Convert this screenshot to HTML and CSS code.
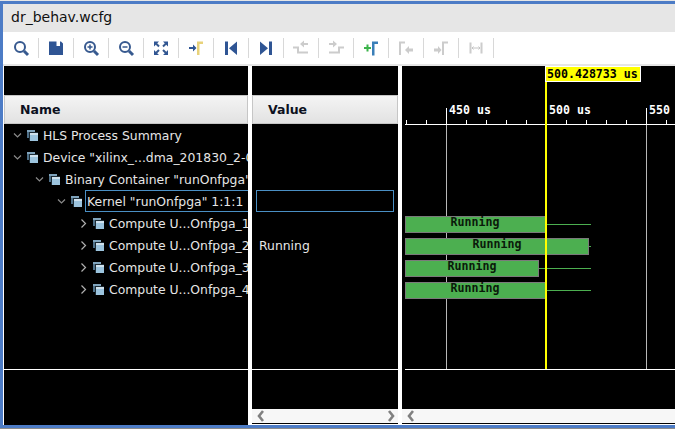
FILE: index.html
```html
<!doctype html>
<html>
<head>
<meta charset="utf-8">
<title>dr_behav.wcfg</title>
<link rel="stylesheet" href="styles.css">
</head>
<body>
<svg class="defs" width="0" height="0">
	<symbol id="scope" viewBox="0 0 11 11">
		<rect x="0" y="0" width="8" height="8" fill="#4f7088"/>
		<rect x="0" y="0" width="8" height="2" fill="#7fa3bc"/>
		<rect x="2" y="2" width="9" height="9" fill="#1c2a33"/>
		<rect x="3" y="3" width="8" height="8" fill="#9cc4de"/>
		<rect x="3" y="3" width="8" height="2" fill="#d0e2ee"/>
	</symbol>
	<symbol id="open" viewBox="0 0 9 9">
		<path d="M1 2.500l3.500 3.500l3.500-3.500" fill="none" stroke="#8a8a8a" stroke-width="1.200"/>
	</symbol>
	<symbol id="closed" viewBox="0 0 9 9">
		<path d="M2.500 .5l4 4l-4 4" fill="none" stroke="#b0b0b0" stroke-width="1.200"/>
	</symbol>
	<symbol id="sb-left" viewBox="0 0 8 12">
		<path d="M6 1l-4 5l4 5" fill="none" stroke="#808080" stroke-width="2.600"/>
	</symbol>
	<symbol id="sb-right" viewBox="0 0 8 12">
		<path d="M2 1l4 5l-4 5" fill="none" stroke="#808080" stroke-width="2.600"/>
	</symbol>
</svg>

<div class="window">
	<div class="title">dr_behav.wcfg</div>

	<div class="toolbar">
		<div class="tool"><svg viewBox="0 0 20 20"><circle class="ln" cx="9" cy="9" r="5"/><path class="ln thick" d="M13 13l4 4"/></svg></div>
		<div class="tool"><svg viewBox="0 0 20 20"><path class="navy" d="M3 3.500h7.500v4.500h3.500v-4.500h1l2 2v11.500h-14z"/></svg></div>
		<div class="tool"><svg viewBox="0 0 20 20"><circle class="ln" cx="9" cy="9" r="5"/><path class="ln thin" d="M6.500 9h5M9 6.500v5"/><path class="ln thick" d="M13 13l4 4"/></svg></div>
		<div class="tool"><svg viewBox="0 0 20 20"><circle class="ln" cx="9" cy="9" r="5"/><path class="ln thin" d="M6.500 9h5"/><path class="ln thick" d="M13 13l4 4"/></svg></div>
		<div class="tool"><svg viewBox="0 0 20 20"><path class="navy" d="M3 3.500h5l-5 5zM17 3.500v5l-5-5zM3 17v-5l5 5zM17 17h-5l5-5z"/><path class="ln" d="M5 5.500l3 3M15 5.500l-3 3M5 15l3-3M15 15l-3-3"/></svg></div>
		<div class="tool"><svg viewBox="0 0 20 20"><path class="navy" d="M3 9h4v-2.500l3.500 3.500l-3.500 3.500v-2.500h-4z"/><path class="gold" d="M11 3.500h6v2.500h-3.500v11h-2.500z"/></svg></div>
		<div class="tool"><svg viewBox="0 0 20 20"><path class="navy" d="M4 3.500h3v13.500h-3zM16 3.500v13.500l-8-6.750z"/></svg></div>
		<div class="tool"><svg viewBox="0 0 20 20"><path class="navy" d="M13 3.500h3v13.500h-3zM4 3.500v13.500l8-6.750z"/></svg></div>
		<div class="tool"><svg viewBox="0 0 20 20"><path class="off-ln" d="M2 9.500h5v5h10"/><path class="off" d="M17 5h-4v-2.500l-4 3.500l4 3.500v-2.500h4z"/></svg></div>
		<div class="tool"><svg viewBox="0 0 20 20"><path class="off-ln" d="M18 9.500h-5v5h-10"/><path class="off" d="M3 5h4v-2.500l4 3.500l-4 3.500v-2.500h-4z"/></svg></div>
		<div class="tool"><svg viewBox="0 0 20 20"><path class="green" d="M5 8h2.500v-2.500h2v2.500h2.500v2h-2.500v2.500h-2v-2.500h-2.500z" transform="translate(-2 1)"/><path class="blue" d="M11 3.500h6v2.500h-3.500v11.500h-2.500z"/></svg></div>
		<div class="tool"><svg viewBox="0 0 20 20"><path class="off" d="M3 3.500h6v2h-4v11.500h-2z"/><path class="off" d="M17 11h-4v-2.500l-4 4l4 4v-2.500h4z" transform="translate(0 -.5)"/></svg></div>
		<div class="tool"><svg viewBox="0 0 20 20"><path class="off" d="M11 3.500h6v2h-4v11.500h-2z"/><path class="off" d="M3 11h4v-2.500l3.500 4l-3.500 4v-2.500h-4z" transform="translate(0 -.5)"/></svg></div>
		<div class="tool"><svg viewBox="0 0 20 20"><path class="off-ln" d="M4.500 4.500v11M15.500 4.500v11"/><path class="off-thin" d="M6 10h8M7.500 8.500l-1.500 1.500l1.500 1.500M12.500 8.500l1.500 1.500l-1.500 1.500"/></svg></div>
	</div>

	<div class="panes">
		<div class="pane names">
			<div class="pane-head">Name</div>
			<div class="tree">
				<div class="row lv0"><svg class="chev"><use href="#open"/></svg><svg class="scope"><use href="#scope"/></svg><span class="label">HLS Process Summary</span></div>
				<div class="row lv0"><svg class="chev"><use href="#open"/></svg><svg class="scope"><use href="#scope"/></svg><span class="label">Device "xilinx_...dma_201830_2-0"</span></div>
				<div class="row lv1"><svg class="chev"><use href="#open"/></svg><svg class="scope"><use href="#scope"/></svg><span class="label">Binary Container "runOnfpga"</span></div>
				<div class="row lv2"><svg class="chev"><use href="#open"/></svg><svg class="scope"><use href="#scope"/></svg><span class="label selected">Kernel "runOnfpga" 1:1:1</span></div>
				<div class="row lv3"><svg class="chev"><use href="#closed"/></svg><svg class="scope"><use href="#scope"/></svg><span class="label">Compute U...Onfpga_1</span></div>
				<div class="row lv3"><svg class="chev"><use href="#closed"/></svg><svg class="scope"><use href="#scope"/></svg><span class="label">Compute U...Onfpga_2</span></div>
				<div class="row lv3"><svg class="chev"><use href="#closed"/></svg><svg class="scope"><use href="#scope"/></svg><span class="label">Compute U...Onfpga_3</span></div>
				<div class="row lv3"><svg class="chev"><use href="#closed"/></svg><svg class="scope"><use href="#scope"/></svg><span class="label">Compute U...Onfpga_4</span></div>
			</div>
			<div class="foot"></div>
		</div>

		<div class="pane values">
			<div class="pane-head">Value</div>
			<div class="tree">
				<div class="vrow"></div>
				<div class="vrow"></div>
				<div class="vrow"></div>
				<div class="vrow selected"></div>
				<div class="vrow"></div>
				<div class="vrow">Running</div>
				<div class="vrow"></div>
				<div class="vrow"></div>
			</div>
			<div class="foot"></div>
			<div class="scrollbar">
				<svg class="sb"><use href="#sb-left"/></svg>
				<svg class="sb"><use href="#sb-right"/></svg>
			</div>
		</div>

		<div class="pane wave">
			<!-- viewBox uses page coordinates so x values read the same as the time axis -->
			<svg class="canvas" viewBox="402 66 273 343">
				<path class="grid" d="M446.500 124V369M646.500 124V369"/>
				<path class="axis" d="M405 124.500H675M405 369.500H675"/>
				<path class="axis" d="M406.500 120v4M426.500 120v4M446.500 108v16M466.500 120v4M486.500 120v4M506.500 120v4M526.500 120v4M566.500 120v4M586.500 120v4M606.500 120v4M626.500 120v4M646.500 108v16M666.500 120v4"/>
				<text class="tick" x="449" y="114">450 us</text>
				<text class="tick" x="549" y="114">500 us</text>
				<text class="tick" x="649" y="114">550</text>

				<path class="trace" d="M546 224.500H591M589 246.500H591M539 268.500H591M546 290.500H591"/>
				<rect class="bar" x="405.500" y="216.500" width="141" height="16"/>
				<rect class="bar" x="405.500" y="238.500" width="183" height="16"/>
				<rect class="bar" x="405.500" y="260.500" width="133" height="16"/>
				<rect class="bar" x="405.500" y="282.500" width="141" height="16"/>
				<text class="state" x="475" y="226">Running</text>
				<text class="state" x="497" y="248">Running</text>
				<text class="state" x="472" y="270">Running</text>
				<text class="state" x="475" y="292">Running</text>

				<rect class="cursor" x="545" y="66" width="2" height="303"/>
				<rect class="flag" x="545.500" y="66.500" width="95" height="15"/>
				<text class="flag-text" x="547" y="78">500.428733 us</text>
			</svg>
			<div class="scrollbar">
				<svg class="sb"><use href="#sb-left"/></svg>
			</div>
		</div>
	</div>
</div>
</body>
</html>
```

FILE: styles.css
```css
*{
	margin:0;
	padding:0;
	box-sizing:border-box;
}
html,body{
	width:675px;
	height:429px;
	overflow:hidden;
}
body{
	background:#8c8c8c;
	font-family:"DejaVu Sans",sans-serif;
	font-size:12.400px;
}
.defs{
	position:absolute;
}
.window{
	height:427px;
	margin-top:1px;
	display:flex;
	flex-direction:column;
	background:#fff;
	border-top:3px solid #4d7cc6;
	border-left:3px solid #4d7cc6;
	border-bottom:3px solid #4d7cc6;
	box-shadow:0 -1px 0 #e6e6e6;
}

/* title + toolbar */
.title{
	height:28px;
	line-height:26px;
	padding-left:8px;
	background:#e6e6e6;
	color:#111;
	font-size:14px;
}
.toolbar{
	height:32px;
	display:flex;
	padding-left:1px;
	align-items:center;
	background:#fff;
	border-bottom:2px solid #e6e6e6;
	box-sizing:content-box;
}
.tool{
	width:35px;
	height:20px;
	display:flex;
	justify-content:center;
	border-right:1px solid #d8d8d8;
}
.tool svg{
	width:20px;
	height:20px;
}
.ln{
	fill:none;
	stroke:#37598f;
	stroke-width:2;
}
.ln.thin{
	stroke-width:1.500;
}
.ln.thick{
	stroke-width:3;
}
.navy{
	fill:#2f5594;
}
.gold{
	fill:#e8d27a;
}
.green{
	fill:#3cb44b;
}
.blue{
	fill:#3a7fb8;
}
.off{
	fill:#cccccc;
}
.off-ln{
	fill:none;
	stroke:#cccccc;
	stroke-width:2;
}
.off-thin{
	fill:none;
	stroke:#c4c4c4;
	stroke-width:1;
}

/* panes */
.panes{
	flex:1;
	min-height:0;
	display:grid;
	grid-template-columns:244px 146px 273px;
	column-gap:4px;
	padding-left:1px;
}
.pane{
	display:flex;
	flex-direction:column;
	min-width:0;
	background:#000;
	color:#e6e6e6;
}
.pane-head{
	height:29px;
	margin-top:29px;
	line-height:27px;
	padding-left:15px;
	background:linear-gradient(#f4f4f4,#e2e2e2);
	border:1px solid #c6c6c6;
	color:#0c1020;
	font-weight:bold;
	font-size:12.500px;
}
.tree{
	height:245px;
}
.foot{
	flex:1;
	border-top:1px solid #fff;
}
.row{
	height:22px;
	display:flex;
	align-items:center;
	white-space:nowrap;
	overflow:hidden;
}
.lv0{
	padding-left:9px;
}
.lv1{
	padding-left:31px;
}
.lv2{
	padding-left:53px;
}
.lv3{
	padding-left:75px;
}
.chev{
	width:9px;
	height:9px;
	flex:none;
	margin-right:5px;
}
.scope{
	width:11px;
	height:11px;
	flex:none;
	margin-right:3px;
}
.label{
	flex:1;
	height:22px;
	line-height:22px;
	padding-left:1px;
	border:1px solid transparent;
	border-right:0;
}
.label.selected{
	border-color:#4a8fc4;
}
.vrow{
	height:22px;
	line-height:22px;
	margin:0 4px;
	padding-left:2px;
	border:1px solid transparent;
}
.vrow.selected{
	border-color:#4a8fc4;
}
.values .foot{
	flex:none;
	height:40px;
}
.scrollbar{
	height:14px;
	display:flex;
	justify-content:space-between;
	align-items:center;
	padding:0 3px 0 5px;
	background:#f7f7f7;
}
.values,.wave{
	height:358px;
}
.sb{
	width:8px;
	height:12px;
}

/* wave canvas */
.canvas{
	display:block;
	width:273px;
	height:343px;
}
.grid{
	fill:none;
	stroke:#b8b8b8;
	stroke-width:1;
}
.axis{
	fill:none;
	stroke:#fff;
	stroke-width:1;
}
.tick,.state,.flag-text{
	font-family:"DejaVu Sans Mono",monospace;
	font-weight:bold;
	font-size:11.600px;
}
.tick{
	fill:#fff;
}
.state{
	fill:#0a1a0a;
	text-anchor:middle;
}
.flag-text{
	fill:#000;
}
.trace{
	fill:none;
	stroke:#4caf50;
	stroke-width:1;
}
.bar{
	fill:#4caf50;
	stroke:#7a7a7a;
	stroke-width:1;
}
.cursor{
	fill:#ffff00;
}
.flag{
	fill:#ffff00;
	stroke:#fff;
	stroke-width:1;
}
```
